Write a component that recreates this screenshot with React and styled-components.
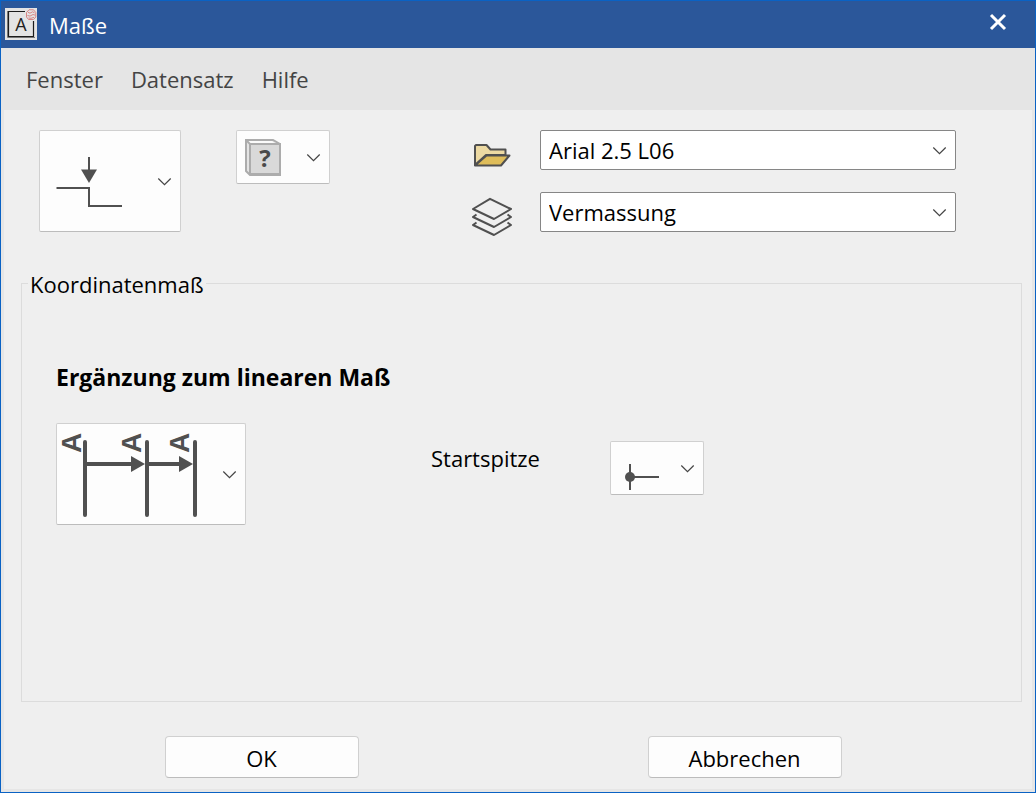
import React from "react";
import styled, { createGlobalStyle } from "styled-components";

const GlobalStyle = createGlobalStyle`
  *, *::before, *::after { box-sizing: border-box; }
  body { margin: 0; }
  body, button, select {
    font-family: "Segoe UI", "Open Sans", "Noto Sans", sans-serif;
    font-size: 22px;
    line-height: 30px;
    color: #000;
  }
`;

const Window = styled.div`
  min-height: 100vh;
  display: flex;
  flex-direction: column;
  border: 1px solid #0a62c4;
  background: #e6e6e6;
`;

const TitleBar = styled.header`
  display: flex;
  align-items: flex-start;
  height: 47px;
  padding: 7px 24px 0 4px;
  background: #2b579a;
  color: #fff;
`;

const Title = styled.h1`
  flex: 1;
  margin: 0;
  padding: 2px 0 0 12px;
  font-size: 22px;
  font-weight: 400;
  line-height: 30px;
`;

const CloseButton = styled.button`
  display: flex;
  align-items: center;
  justify-content: center;
  width: 26px;
  height: 28px;
  padding: 0;
  border: 0;
  background: transparent;
`;

const MenuBar = styled.nav`
  display: flex;
  align-items: center;
  gap: 28px;
  height: 62px;
  padding: 0 25px;
  background: #e5e5e5;
`;

const MenuItem = styled.button`
  padding: 0;
  border: 0;
  background: transparent;
  color: #444;
`;

const Content = styled.main`
  flex: 1;
  display: flex;
  flex-direction: column;
  margin: 0 3px 3px;
  background: #efefef;
`;

const Toolbar = styled.section`
  display: flex;
  align-items: flex-start;
  padding: 20px 76px 0 35px;
`;

const ToolButtons = styled.div`
  display: flex;
  align-items: flex-start;
  gap: 55px;
  margin-right: 142px;
`;

const sizes = {
  small: { width: 94, height: 54 },
  medium: { width: 142, height: 102 },
  large: { width: 190, height: 102 },
};

const DropButton = styled.button`
  flex: none;
  display: flex;
  align-items: center;
  justify-content: space-between;
  width: ${(p) => sizes[p.$size].width}px;
  height: ${(p) => sizes[p.$size].height}px;
  padding: 0 8px 0 0;
  border: 1px solid #d0d0d0;
  border-bottom-color: #bcbcbc;
  border-radius: 2px;
  background: #fdfdfd;

  > svg { flex: none; overflow: visible; }
`;

const Fields = styled.div`
  flex: 1;
  display: flex;
  flex-direction: column;
  gap: 22px;
`;

const Field = styled.div`
  display: flex;
  align-items: center;
  gap: 28px;
`;

const FieldLabel = styled.label`
  display: flex;
  width: 40px;
  height: 40px;

  > svg { flex: none; overflow: visible; }
`;

const SelectBox = styled.div`
  flex: 1;
  display: grid;
  align-items: center;

  > * { grid-area: 1 / 1; }
  > svg { justify-self: end; margin-right: 9px; pointer-events: none; }
`;

const Select = styled.select`
  appearance: none;
  width: 100%;
  height: 40px;
  padding: 0 32px 0 8px;
  border: 1px solid #868686;
  border-radius: 2px;
  background: #fff;
`;

const Group = styled.fieldset`
  flex: 1;
  min-width: 0;
  margin: 36px 10px 0 17px;
  padding: 64px 34px 0;
  border: 1px solid #dcdcdc;
`;

const GroupTitle = styled.legend`
  margin-left: -28px;
  padding: 2px 2px 0;
  line-height: 28px;
`;

const SubHeading = styled.h2`
  margin: 0 0 31px;
  font-size: 23px;
  font-weight: 700;
  line-height: 30px;
`;

const OptionRow = styled.div`
  display: flex;
  align-items: flex-start;
`;

const TipOption = styled.div`
  display: flex;
  align-items: flex-start;
  gap: 70px;
  padding-top: 18px;
  margin-left: 185px;
`;

const OptionLabel = styled.label`
  width: 109px;
  white-space: nowrap;
  line-height: 34px;
`;

const Footer = styled.footer`
  display: grid;
  grid-template-columns: 1fr 1fr;
  justify-items: center;
  padding: 34px 46px 11px 16px;
`;

const ActionButton = styled.button`
  width: 194px;
  height: 42px;
  padding: 2px 0 0;
  border: 1px solid #d0d0d0;
  border-bottom-color: #bcbcbc;
  border-radius: 4px;
  background: #fdfdfd;
`;

const Chevron = () => (
  <svg width="15" height="10" viewBox="0 0 15 10" fill="none" aria-hidden="true">
    <path d="M1.3 2.500 7.500 8.700 13.700 2.500" stroke="#444" strokeWidth="1.2" />
  </svg>
);

const AppIcon = () => (
  <svg width="32" height="32" viewBox="0 0 32 32" fill="none" aria-hidden="true">
    <rect width="32" height="32" fill="#e4e4e4" />
    <path d="M20 3.500H3.500v25h25V13" stroke="#1c1c1c" strokeWidth="1.2" />
    <path d="M2.500 3v26.500H30" stroke="#777" strokeWidth="1" />
    <text x="16" y="23" textAnchor="middle" fontSize="18" fill="#222">A</text>
    <path d="M21.500 4.500 24 1.800h4.500l2.300 2.700v4.500l-2.300 2.500h-5L21.500 9ZM23 4.300l2 .9 2.500-1.400 2 1M22.500 7.500l2.500.6L28 6.500l2.200.7M23.500 10l2.500.3 3-1" stroke="#d98484" strokeWidth="1" />
  </svg>
);

const CloseIcon = () => (
  <svg width="18" height="18" viewBox="0 0 18 18" aria-hidden="true">
    <path d="m2 2 14 14M16 2 2 16" stroke="#fff" strokeWidth="3" />
  </svg>
);

const CoordinateIcon = () => (
  <svg width="100" height="100" viewBox="0 0 100 100" fill="none" aria-hidden="true">
    <path d="M49 26v14M16.500 57H49v18h33" stroke="#505050" strokeWidth="2" />
    <path d="M41 38.500h16L49 52Z" fill="#505050" />
  </svg>
);

const HelpBoxIcon = () => (
  <svg width="52" height="52" viewBox="0 0 52 52" aria-hidden="true">
    <path d="M9 9h27l7 4v31H13l-4-4Z" fill="#e4e4e4" stroke="#acacac" strokeWidth="2" />
    <path d="M10 10h25l4 3H13Z" fill="#fbfbfb" />
    <path d="m9 9 4 4" stroke="#acacac" strokeWidth="2" />
    <rect x="13" y="13" width="30" height="30" fill="#d9d9d9" stroke="#acacac" strokeWidth="2" />
    <text x="28" y="36" textAnchor="middle" fontSize="24" fontWeight="700" fill="#4a4a4a">?</text>
  </svg>
);

const FolderIcon = () => (
  <svg width="40" height="40" viewBox="0 0 40 40" strokeLinejoin="round" aria-hidden="true">
    <path d="M3 35V16l1-1h10.500l4 4.500H33.500V25H14L3 35Z" fill="#ecd9a2" stroke="#505050" strokeWidth="2" />
    <path d="M3 35.500 14.500 25.500H37.500l-8.500 10Z" fill="#dfbd5a" stroke="#505050" strokeWidth="2" />
  </svg>
);

const LayersIcon = () => (
  <svg width="40" height="40" viewBox="0 0 40 40" fill="none" stroke="#505050" strokeWidth="2" strokeLinejoin="round" aria-hidden="true">
    <path d="M18 6.800 39 17 22 27 1 17Z" />
    <path d="M4.500 22.500 1 25l21 10 17-10-3.500-2.500" />
    <path d="M4.500 30.500 1 33l21 10 17-10-3.500-2.500" />
  </svg>
);

const DimensionIcon = () => (
  <svg width="150" height="100" viewBox="0 0 150 100" aria-hidden="true">
    <path d="M28 18v73M90 18v73M138 18v73" stroke="#505050" strokeWidth="4" strokeLinecap="round" />
    <path d="M28 40h48M90 40h34" stroke="#505050" strokeWidth="4" />
    <path d="m74 32 14 8-14 8ZM122 32l14 8-14 8Z" fill="#505050" />
    {[24, 84, 132].map((x) => (
      <text
        key={x}
        transform={`translate(${x} 19) rotate(-90)`}
        textAnchor="middle"
        fontFamily="Liberation Sans, sans-serif"
        fontSize="28"
        fontWeight="700"
        fill="#505050"
      >
        A
      </text>
    ))}
  </svg>
);

const StartTipIcon = () => (
  <svg width="52" height="52" viewBox="0 0 52 52" aria-hidden="true">
    <path d="M19 22v26M19 35h29" stroke="#505050" strokeWidth="2" />
    <circle cx="19" cy="35" r="5" fill="#505050" />
  </svg>
);

function SelectField({ id, label, icon, value }) {
  return (
    <Field>
      <FieldLabel htmlFor={id} aria-label={label}>
        {icon}
      </FieldLabel>
      <SelectBox>
        <Select id={id} aria-label={label} defaultValue={value}>
          <option>{value}</option>
        </Select>
        <Chevron />
      </SelectBox>
    </Field>
  );
}

export default function App() {
  return (
    <>
      <GlobalStyle />
      <Window>
        <TitleBar>
          <AppIcon />
          <Title>Maße</Title>
          <CloseButton type="button" aria-label="Schließen">
            <CloseIcon />
          </CloseButton>
        </TitleBar>
        <MenuBar>
          <MenuItem type="button">Fenster</MenuItem>
          <MenuItem type="button">Datensatz</MenuItem>
          <MenuItem type="button">Hilfe</MenuItem>
        </MenuBar>
        <Content>
          <Toolbar>
            <ToolButtons>
              <DropButton type="button" $size="medium" aria-label="Maßtyp">
                <CoordinateIcon />
                <Chevron />
              </DropButton>
              <DropButton type="button" $size="small" aria-label="Hilfe">
                <HelpBoxIcon />
                <Chevron />
              </DropButton>
            </ToolButtons>
            <Fields>
              <SelectField id="style" label="Stil" icon={<FolderIcon />} value="Arial 2.5 L06" />
              <SelectField id="layer" label="Ebene" icon={<LayersIcon />} value="Vermassung" />
            </Fields>
          </Toolbar>
          <Group>
            <GroupTitle>Koordinatenmaß</GroupTitle>
            <SubHeading>Ergänzung zum linearen Maß</SubHeading>
            <OptionRow>
              <DropButton type="button" $size="large" aria-label="Ergänzung zum linearen Maß">
                <DimensionIcon />
                <Chevron />
              </DropButton>
              <TipOption>
                <OptionLabel htmlFor="start-tip">Startspitze</OptionLabel>
                <DropButton id="start-tip" type="button" $size="small">
                  <StartTipIcon />
                  <Chevron />
                </DropButton>
              </TipOption>
            </OptionRow>
          </Group>
          <Footer>
            <ActionButton type="button">OK</ActionButton>
            <ActionButton type="button">Abbrechen</ActionButton>
          </Footer>
        </Content>
      </Window>
    </>
  );
}
